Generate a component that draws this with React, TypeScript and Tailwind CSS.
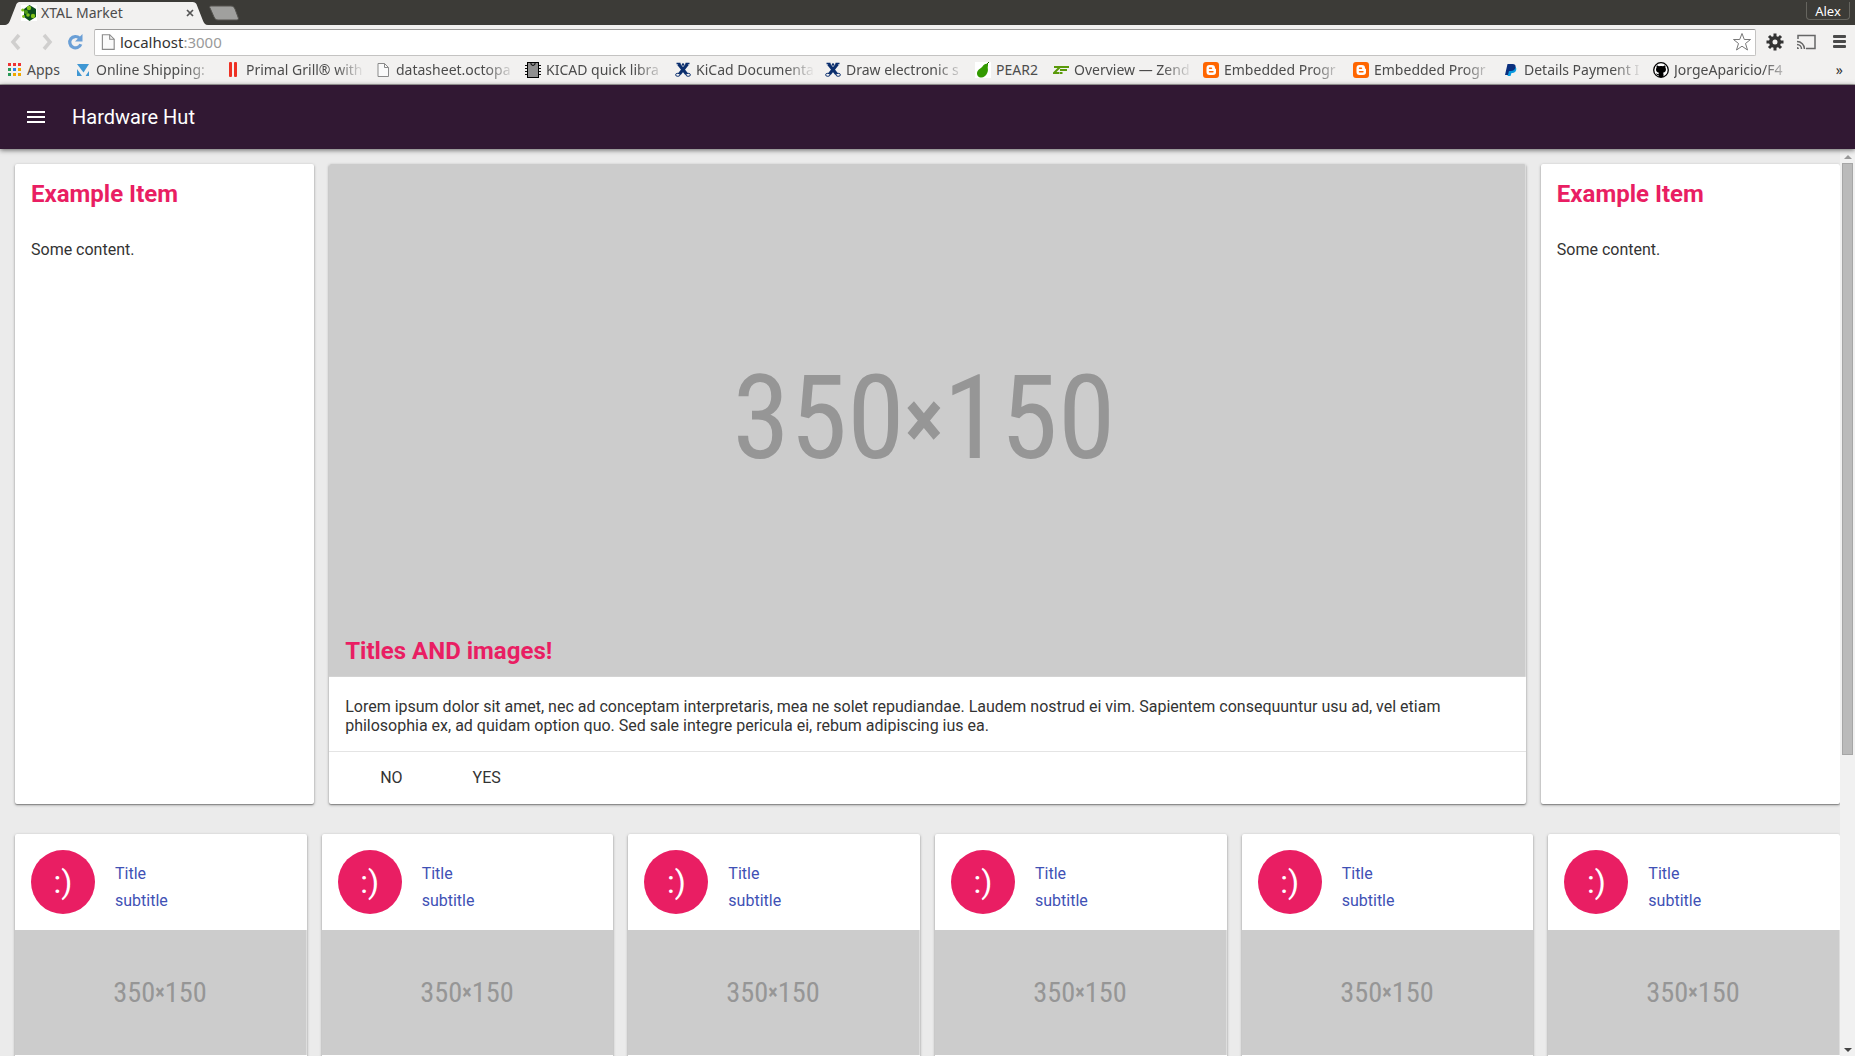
import React, { ReactNode } from 'react';
import { MdMenu } from 'react-icons/md';

function Placeholder() {
  return (
    <svg viewBox="0 0 350 150" className="block w-full" role="img" aria-label="350×150">
      <rect width="350" height="150" fill="#cccccc" />
      <text x="174" y="86" textAnchor="middle" fontSize="34" fill="#969696" fontFamily="'Roboto Condensed', Roboto, sans-serif">
        350<tspan fontSize="24" fontWeight="700" dy="-3">×</tspan><tspan dy="3">150</tspan>
      </text>
    </svg>
  );
}

const cardShadow = 'rounded-xs bg-white shadow-[0_1px_3px_rgba(0,0,0,0.35),0_1px_1px_rgba(0,0,0,0.25)]';

function Page({ size = 'h-4 w-4' }: { size?: string }) {
  return (
    <svg viewBox="0 0 16 16" className={size}>
      <path d="M3 1.500h6.500l4 4v9H3z" fill="#fafafa" stroke="#8a8a8a" />
      <path d="M9.500 1.500v4h4" fill="none" stroke="#8a8a8a" />
    </svg>
  );
}

function AppsIcon() {
  const colors = ['#e33', '#e33', '#e33', '#2a9a58', '#2a80e8', '#f0a800', '#2a9a58', '#f0a800', '#f0a800'];
  return (
    <svg viewBox="0 0 14 14" className="h-3.5 w-3.5">
      {colors.map((c, i) => (
        <rect key={i} x={(i % 3) * 5} y={Math.floor(i / 3) * 5} width="3" height="3" fill={c} />
      ))}
    </svg>
  );
}

function ShippingIcon() {
  return (
    <svg viewBox="0 0 16 16" className="h-4 w-4" fill="#3f97d3">
      <path d="M2 2h12L8.500 10.500z" />
      <path d="M2 7l5 7H2zM14 9v5h-3.500z" />
    </svg>
  );
}

function GrillIcon() {
  return (
    <svg viewBox="0 0 16 16" className="h-4 w-4" fill="#ee3124">
      <rect x="4" y="0" width="3" height="15" rx="1" />
      <rect x="9" y="0" width="3" height="15" rx="1" />
    </svg>
  );
}

function ChipIcon() {
  return (
    <svg viewBox="0 0 16 16" className="h-4 w-4">
      <path d="M0 3.500h16M0 6.500h16M0 9.500h16M0 12.500h16" stroke="#111" />
      <rect x="2.500" y="0.500" width="11" height="15" fill="#8f8f8f" stroke="#000" />
      <path d="M6 1v1.500l2 1 2-1V1" fill="none" stroke="#000" />
    </svg>
  );
}

function KicadIcon() {
  return (
    <svg viewBox="0 0 16 16" className="h-4 w-4" fill="none" stroke="#0b2f6e">
      <path d="M3.500 2l8 10M12.500 2l-8 10" strokeWidth="3.200" />
      <path d="M1.500 1.500h4M10.500 1.500h4" strokeWidth="1.500" />
      <circle cx="8" cy="2.500" r="1.200" fill="#0b2f6e" stroke="none" />
      <ellipse cx="2.800" cy="12.800" rx="2.200" ry="1.500" />
      <ellipse cx="13.200" cy="12.800" rx="2.200" ry="1.500" />
    </svg>
  );
}

function PearIcon() {
  return (
    <svg viewBox="0 0 16 16" className="h-4 w-4">
      <rect width="16" height="16" fill="#fff" />
      <path d="M13 2c.2 1.500-.4 2.800-.2 4.200.2 1.600.3 3-.6 4.800-1.400 3.200-4 5-6.700 4.500C2.500 15 1.200 12 2.500 9.300 3.700 7 6 6.500 7.500 4.500 9 2.300 10.500 1.300 13 2z" fill="#339a00" />
      <path d="M12 2l2-2" stroke="#246b00" />
    </svg>
  );
}

function ZendIcon() {
  return (
    <svg viewBox="0 0 16 16" className="h-4 w-4" fill="none" stroke="#5a9a0a" strokeWidth="2">
      <path d="M1 5h6L1 11h5M8 5h8M7 8h7M6.500 11h3" />
    </svg>
  );
}

function BloggerIcon() {
  return (
    <svg viewBox="0 0 16 16" className="h-4 w-4">
      <rect width="16" height="16" rx="3" fill="#ff6600" />
      <path d="M6.500 3h2.500c2 0 3 1 3 3 0 1 1 .5 1 1.500V10c0 2-1 3-3 3H6.500c-2 0-3-1-3-3V6c0-2 1-3 3-3z" fill="#fff" />
      <path d="M6.500 6.200h2M6.500 9.800h3.500" stroke="#ff6600" strokeWidth="1.400" strokeLinecap="round" />
    </svg>
  );
}

function PaypalIcon() {
  return (
    <svg viewBox="0 0 16 16" className="h-4 w-4">
      <path d="M6 5h6.500c1.200 1 1 3 0 4.500-1 1.300-2.500 1.500-4 1.500L7.500 14H4.500z" fill="#0a9be0" />
      <path d="M4.500 2h5c2.500 0 3.500 1.500 3 3.500-.5 2.500-2.500 3.500-5 3.500H6l-1 4H2z" fill="#0a2f7e" />
    </svg>
  );
}

function GithubIcon() {
  return (
    <svg viewBox="0 0 16 16" className="h-4 w-4">
      <circle cx="8" cy="8" r="7.300" fill="#fff" stroke="#000" strokeWidth="1.300" />
      <path d="M3.800 3.200l2.200 1.100c1.300-.3 2.700-.3 4 0l2.200-1.100c.4 1 .4 1.700.2 2.300 1.200 2.300.5 4.700-2.400 5.200.3.400.5.900.5 1.500V15h-5v-2c-1.500.2-2-.6-2.600-1.500.9 0 1.400.9 2.600.7 0-.6.200-1.100.5-1.500-2.900-.5-3.600-2.900-2.400-5.200-.2-.6-.2-1.300.2-2.300z" fill="#000" />
    </svg>
  );
}

function GearIcon() {
  return (
    <svg viewBox="0 0 18 18" className="h-[18px] w-[18px]" fill="none" stroke="#333">
      <path d="M9 .5v17M.5 9h17M3 3l12 12M15 3L3 15" strokeWidth="3" />
      <circle cx="9" cy="9" r="4.300" fill="#f2f1f0" strokeWidth="3.600" />
    </svg>
  );
}

function CastIcon() {
  return (
    <svg viewBox="0 0 20 16" className="h-4 w-5" fill="none" stroke="#666" strokeWidth="1.500">
      <path d="M2 5V1.500h17v13h-9" />
      <path d="M1 7.500a7.500 7.500 0 0 1 7.500 7.500M1 10.500A4.500 4.500 0 0 1 5.500 15" />
      <path d="M1 13a2 2 0 0 1 2 2H1z" fill="#666" stroke="none" />
    </svg>
  );
}

type Bookmark = { label: string; icon: ReactNode; width: string; fade?: boolean };

const bookmarks: Bookmark[] = [
  { label: 'Apps', icon: <AppsIcon />, width: 'w-[67px]' },
  { label: 'Online Shipping:', icon: <ShippingIcon />, width: 'w-[150px]', fade: true },
  { label: 'Primal Grill® with', icon: <GrillIcon />, width: 'w-[150px]', fade: true },
  { label: 'datasheet.octopa', icon: <Page />, width: 'w-[150px]', fade: true },
  { label: 'KICAD quick libra', icon: <ChipIcon />, width: 'w-[150px]', fade: true },
  { label: 'KiCad Documenta', icon: <KicadIcon />, width: 'w-[150px]', fade: true },
  { label: 'Draw electronic s', icon: <KicadIcon />, width: 'w-[150px]', fade: true },
  { label: 'PEAR2', icon: <PearIcon />, width: 'w-[78px]' },
  { label: 'Overview — Zend', icon: <ZendIcon />, width: 'w-[150px]', fade: true },
  { label: 'Embedded Progr', icon: <BloggerIcon />, width: 'w-[150px]', fade: true },
  { label: 'Embedded Progr', icon: <BloggerIcon />, width: 'w-[150px]', fade: true },
  { label: 'Details Payment I', icon: <PaypalIcon />, width: 'w-[150px]', fade: true },
  { label: 'JorgeAparicio/F4', icon: <GithubIcon />, width: 'w-[150px]', fade: true },
];

function TabStrip() {
  return (
    <div className="flex h-[25px] items-end justify-between bg-[#3c3b37]">
      <div className="flex items-end">
        <div className="relative flex h-6 w-[208px] items-center gap-1 pl-[21px] pr-[14px]">
          <svg viewBox="0 0 212 24" preserveAspectRatio="none" className="absolute inset-0 h-full w-full">
            <path d="M4 24c4 0 5-2 6-4l6-15c1-3 2-4 4-4h176c3 0 4 1 5 4l6 15c1 2 2 4 5 4z" fill="#f2f1f0" />
          </svg>
          <svg viewBox="0 0 16 16" className="relative h-4 w-4">
            <rect width="16" height="16" fill="#fff" />
            <path d="M8.500 0l6.500 4v8l-6.500 4L3 12V4z" fill="#0b4d1e" />
            <circle cx="8" cy="3" r="2.200" fill="#7fc31c" />
            <circle cx="5" cy="7" r="2" fill="#4c9a1c" />
            <circle cx="7" cy="10" r="1.800" fill="#7fc31c" />
            <circle cx="12" cy="11" r="2.200" fill="#7fc31c" />
            <circle cx="1.800" cy="5" r="1.600" fill="#7fc31c" />
            <circle cx="2.500" cy="11.500" r="1.400" fill="#7fc31c" />
          </svg>
          <span className="relative flex-1 text-[14px] leading-5 text-[#4c4c4c]">XTAL Market</span>
          <button aria-label="Close tab" className="relative">
            <svg viewBox="0 0 8 8" className="h-2 w-2" stroke="#555" strokeWidth="1.700">
              <path d="M1 1l6 6M7 1L1 7" />
            </svg>
          </button>
        </div>
        <button aria-label="New tab" className="mb-1">
          <svg viewBox="0 0 32 16" className="h-4 w-8">
            <path d="M3 1h20c2 0 3 1 4 3l3 8c1 2 0 3-1 3H10c-2 0-3-1-4-3L2 3c-1-1 0-2 1-2z" fill="#a0a09e" stroke="#54534f" />
          </svg>
        </button>
      </div>
      <button className="mb-[5px] mr-[5px] h-[18px] w-11 rounded-b border border-t-0 border-[#66655f] text-[13px] leading-4 text-white">Alex</button>
    </div>
  );
}

function Toolbar() {
  return (
    <div className="flex h-8 items-center pb-px pl-2 pr-[9px] pt-[3px]">
      <button aria-label="Back" className="w-[31px]">
        <svg viewBox="0 0 16 18" className="h-[18px] w-4" fill="none" stroke="#d0cfce" strokeWidth="3.500">
          <path d="M11 2L5 9l6 7" />
        </svg>
      </button>
      <button aria-label="Forward" className="w-7">
        <svg viewBox="0 0 16 18" className="h-[18px] w-4" fill="none" stroke="#d0cfce" strokeWidth="3.500">
          <path d="M5 2l6 7-6 7" />
        </svg>
      </button>
      <button aria-label="Reload" className="w-[27px]">
        <svg viewBox="0 0 16 18" className="h-[18px] w-4">
          <path d="M12.500 5.200a5.700 5.700 0 1 0 1.300 6" fill="none" stroke="#6a9fd6" strokeWidth="3.200" />
          <path d="M15.500 1v7.500H8z" fill="#6a9fd6" />
        </svg>
      </button>
      <div className="flex h-[27px] min-w-0 flex-1 items-center rounded-xs border border-[#c4c3c2] border-t-[#9a9998] bg-white pl-1 pr-[3px]">
        <Page size="h-[18px] w-[18px]" />
        <div className="relative ml-[3px] flex-1 text-[15px] leading-6">
          <input aria-label="Address" defaultValue="localhost:3000" className="block w-full bg-transparent text-transparent outline-none" />
          <span aria-hidden="true" className="pointer-events-none absolute inset-0 text-[#9a9a9a]">
            <span className="text-[#333]">localhost</span>:3000
          </span>
        </div>
        <button aria-label="Bookmark this page">
          <svg viewBox="0 0 20 20" className="h-5 w-5" fill="#fff" stroke="#777">
            <path d="M10 1.500l2.300 6h6.200l-5 4 2 6.500-5.500-3.800L4.500 18l2-6.500-5-4h6.200z" strokeLinejoin="round" />
          </svg>
        </button>
      </div>
      <button aria-label="Settings" className="ml-2.5"><GearIcon /></button>
      <button aria-label="Cast" className="ml-3"><CastIcon /></button>
      <button aria-label="Menu" className="ml-[17px]">
        <svg viewBox="0 0 13 14" className="h-3.5 w-[13px]" fill="#4a4a4a">
          <rect width="13" height="3" rx="1" />
          <rect y="5" width="13" height="3" rx="1" />
          <rect y="10" width="13" height="3" rx="1" />
        </svg>
      </button>
    </div>
  );
}

function BookmarkBar() {
  return (
    <nav className="flex h-7 items-center justify-between border-b border-[#a9a8a6] pb-0.5 pl-2 pr-3">
      <div className="flex min-w-0">
        {bookmarks.map((b, i) => (
          <a key={i} href="#" className={`flex shrink-0 items-center gap-[5px] ${b.width}`}>
            <span className="shrink-0">{b.icon}</span>
            <span
              className={`whitespace-nowrap text-[14px] leading-5 text-[#4c4c4c] ${
                b.fade ? 'mr-2.5 min-w-0 flex-1 [mask-image:linear-gradient(to_right,black_75%,transparent)]' : ''
              }`}
            >
              {b.label}
            </span>
          </a>
        ))}
      </div>
      <button aria-label="More bookmarks" className="text-[14px] leading-5 text-[#333]">»</button>
    </nav>
  );
}

function SideCard() {
  return (
    <section className={`p-4 ${cardShadow}`}>
      <h2 className="text-[24px] font-bold leading-7 text-[#e91e63]">Example Item</h2>
      <p className="mt-8 leading-5">Some content.</p>
    </section>
  );
}

function MainCard() {
  return (
    <section className={`overflow-hidden ${cardShadow}`}>
      <div className="relative">
        <Placeholder />
        <h2 className="absolute bottom-3 left-4 text-[24px] font-bold leading-7 text-[#e91e63]">Titles AND images!</h2>
      </div>
      <p className="px-4 pb-4 pt-5 leading-[19px]">
        Lorem ipsum dolor sit amet, nec ad conceptam interpretaris, mea ne solet repudiandae. Laudem nostrud ei vim. Sapientem consequuntur usu ad, vel etiam philosophia ex, ad quidam option quo. Sed sale integre pericula ei, rebum adipiscing ius ea.
      </p>
      <div className="flex h-[53px] items-center gap-[70px] border-t border-[#e4e4e4] pl-[51px]">
        <button>NO</button>
        <button>YES</button>
      </div>
    </section>
  );
}

function ItemCard() {
  return (
    <article className={`min-w-0 flex-1 overflow-hidden pb-4 ${cardShadow}`}>
      <header className="flex items-center gap-5 p-4">
        <div className="flex h-16 w-16 shrink-0 items-center justify-center rounded-full bg-[#e91e63] text-[32px] leading-none text-white">:)</div>
        <div className="pt-2.5 leading-[27px] text-[#3f51b5]">
          <h3>Title</h3>
          <p>subtitle</p>
        </div>
      </header>
      <Placeholder />
    </article>
  );
}

function Scrollbar() {
  return (
    <div aria-hidden="true" className="flex w-[15px] shrink-0 flex-col items-center bg-[#f1f1f1] pb-1 pt-1.5">
      <svg viewBox="0 0 8 4" className="h-1 w-2"><path d="M0 4l4-4 4 4z" fill="#999" /></svg>
      <div className="mt-1 h-[592px] w-[11px] border border-[#a6a6a6] bg-[#bababa]" />
      <svg viewBox="0 0 8 4" className="mt-auto h-1 w-2"><path d="M0 0h8L4 4z" fill="#444" /></svg>
    </div>
  );
}

export default function App() {
  return (
    <div className="flex h-screen flex-col overflow-hidden bg-[#ebebeb] font-['Roboto',sans-serif] text-[16px] text-[#333]">
      <div className="shrink-0 bg-[#f2f1f0] font-['Noto_Sans',sans-serif]">
        <TabStrip />
        <Toolbar />
        <BookmarkBar />
      </div>
      <header className="relative flex h-16 shrink-0 items-center gap-6 bg-[#311833] pl-6 text-white shadow-[0_1px_5px_rgba(0,0,0,0.6)]">
        <button aria-label="Open menu"><MdMenu className="h-6 w-6" /></button>
        <h1 className="text-[20px] leading-6">Hardware Hut</h1>
      </header>
      <div className="flex min-h-0 flex-1">
        <main className="min-w-0 flex-1 overflow-hidden pl-[15px] pt-[15px]">
          <div className="grid grid-cols-[minmax(0,1fr)_minmax(0,4fr)_minmax(0,1fr)] gap-[15px]">
            <SideCard />
            <MainCard />
            <SideCard />
          </div>
          <div className="mt-[30px] flex gap-[15px]">
            {[0, 1, 2, 3, 4, 5].map((n) => <ItemCard key={n} />)}
          </div>
        </main>
        <Scrollbar />
      </div>
    </div>
  );
}
